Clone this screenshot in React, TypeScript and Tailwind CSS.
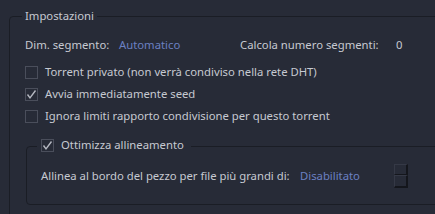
import React from "react";

const FONT = { fontFamily: '"Noto Sans", "Open Sans", sans-serif' };

function Box({ checked }: { checked?: boolean }) {
  return (
    <span className="flex h-[13px] w-[13px] shrink-0 items-center justify-center border border-[#4a4e5b] bg-[#272b37]">
      {checked && (
        <svg width="11" height="11" viewBox="0 0 11 11" fill="none">
          <path d="M1.5 5.5 L4 8.8 L9.5 1.5" stroke="#b6b9c2" strokeWidth="1.4" />
        </svg>
      )}
    </span>
  );
}

function CheckRow({ label, checked }: { label: string; checked?: boolean }) {
  return (
    <div className="flex h-[22px] items-center gap-[7px]">
      <Box checked={checked} />
      <span>{label}</span>
    </div>
  );
}

function SpinArrows() {
  return (
    <div className="flex w-[14px] flex-col">
      <span className="h-[11px] border-t border-l border-r-2 border-b border-t-[#353946] border-l-[#353946] border-r-[#14161c] border-b-[#14161c]" />
      <span className="h-[13px] border-t border-l border-r-2 border-b-2 border-t-[#353946] border-l-[#353946] border-r-[#14161c] border-b-[#14161c]" />
    </div>
  );
}

export default function App() {
  return (
    <div
      className="h-[214px] w-[435px] overflow-hidden whitespace-nowrap bg-[#272b37] text-[11.3px] leading-[16px] text-[#c6c9d1]"
      style={FONT}
    >
      <div className="relative ml-[9px] mr-[-20px] mt-[16px] h-[240px] rounded-[4px] border border-[#1a1d25] pl-[15px] pt-[19px]">
        <span className="absolute left-[12px] top-[-9px] bg-[#272b37] px-[3px]">Impostazioni</span>

        <div className="flex h-[18px] items-center">
          <span className="w-[94px]">Dim. segmento:</span>
          <span className="w-[121px] text-[#6b80c2]">Automatico</span>
          <span className="w-[156px]">Calcola numero segmenti:</span>
          <span>0</span>
        </div>

        <div className="mt-[7px]">
          <CheckRow label="Torrent privato (non verrà condiviso nella rete DHT)" />
          <CheckRow label="Avvia immediatamente seed" checked />
          <CheckRow label="Ignora limiti rapporto condivisione per questo torrent" />
        </div>

        <div className="relative ml-[1px] mt-[19px] h-[59px] rounded-[4px] border border-[#1a1d25] pl-[14px] pt-[20px]">
          <div className="absolute left-[10px] top-[-10px] flex items-center gap-[7px] bg-[#272b37] px-[4px]">
            <Box checked />
            <span className="pr-[3px]">Ottimizza allineamento</span>
          </div>
          <div className="flex h-[18px] items-center">
            <span className="w-[259px]">Allinea al bordo del pezzo per file più grandi di:</span>
            <span className="w-[94px] text-[#6b80c2]">Disabilitato</span>
            <SpinArrows />
          </div>
        </div>
      </div>
    </div>
  );
}
